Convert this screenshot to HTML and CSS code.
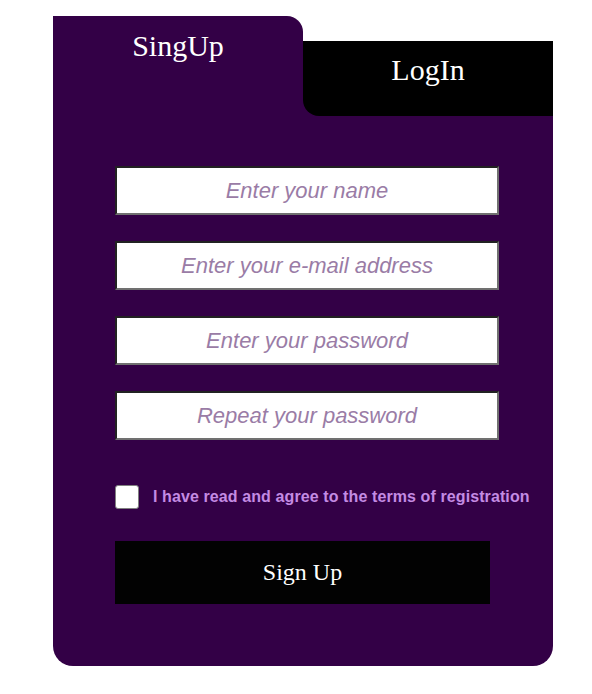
FILE: index.html
```html
<!DOCTYPE html>
<html>
<head>
<meta charset="utf-8">
<link rel="stylesheet" href="styles.css">
</head>
<body>
<div class="card">
  <div class="tabs">
    <div class="tab tab-signup">SingUp</div>
    <div class="tab-login-wrap"><div class="tab tab-login">LogIn</div></div>
  </div>
  <form class="body">
    <input class="field" type="text" placeholder="Enter your name">
    <input class="field" type="email" placeholder="Enter your e-mail address">
    <input class="field" type="password" placeholder="Enter your password">
    <input class="field" type="password" placeholder="Repeat your password">
    <label class="agree"><input class="check" type="checkbox"><span>I have read and agree to the terms of registration</span></label>
    <button class="submit" type="button">Sign Up</button>
  </form>
</div>
</body>
</html>
```

FILE: styles.css
```css
html, body {
  margin: 0;
  padding: 0;
  background: #ffffff;
}
.card {
  width: 500px;
  margin: 16px 0 0 53px;
  font-family: "Liberation Serif", "Times New Roman", serif;
}
.tabs {
  display: flex;
  height: 100px;
}
.tab {
  width: 250px;
  box-sizing: border-box;
  color: #ffffff;
  font-size: 30px;
  line-height: 32px;
  text-align: center;
}
.tab-signup {
  background: #330046;
  border-top-right-radius: 16px;
  padding-top: 14px;
}
.tab-login-wrap {
  width: 250px;
  margin-top: 25px;
  background: #330046;
}
.tab-login {
  height: 75px;
  background: #000000;
  border-bottom-left-radius: 16px;
  padding-top: 13px;
}
.body {
  margin: 0;
  background: #330046;
  border-radius: 0 0 20px 20px;
  padding: 50px 0 62px 62px;
  display: flex;
  flex-direction: column;
  align-items: flex-start;
}
.field {
  box-sizing: border-box;
  width: 384px;
  height: 49px;
  margin: 0 0 26px 0;
  padding: 0 8px;
  border-width: 2px;
  border-style: solid;
  border-color: #222222 #707070 #707070 #222222;
  background: #ffffff;
  font-family: "Liberation Sans", Arial, sans-serif;
  font-size: 22px;
  font-style: italic;
  text-align: center;
  outline: none;
}
.field::placeholder {
  color: #9a7ca6;
  opacity: 1;
}
.agree {
  display: flex;
  align-items: center;
  gap: 14px;
  margin-top: 19px;
  font-family: "Liberation Sans", Arial, sans-serif;
  font-size: 16px;
  font-weight: bold;
  letter-spacing: 0.1px;
  color: #c48be3;
}
.check {
  appearance: none;
  -webkit-appearance: none;
  box-sizing: border-box;
  width: 24px;
  height: 24px;
  margin: 0;
  background: #ffffff;
  border: 1px solid #808080;
  border-radius: 3px;
}
.submit {
  margin-top: 32px;
  width: 375px;
  height: 63px;
  border: none;
  background: #020202;
  color: #ffffff;
  font-family: "Liberation Serif", "Times New Roman", serif;
  font-size: 24px;
  padding: 0;
}
```
